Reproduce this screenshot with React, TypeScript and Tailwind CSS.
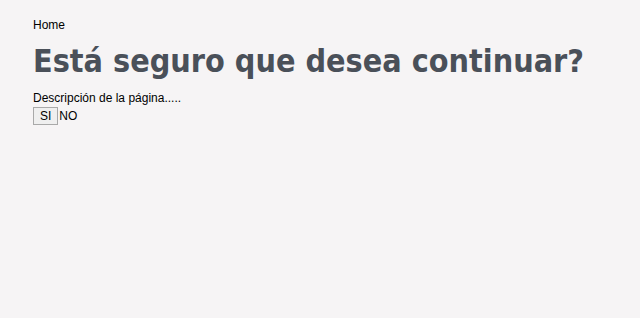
export default function App() {
  return (
    <div className="min-h-screen bg-[#f6f4f5] px-[33px] pt-[18px] font-['Liberation_Sans',Arial,sans-serif] text-[12px] text-black">
      <div className="leading-[15px]">Home</div>
      <h1 className="mt-[4px] whitespace-nowrap font-['DejaVu_Sans',sans-serif] font-stretch-condensed text-[32px] font-bold leading-[48px] text-[#4a5059]">
        Está seguro que desea continuar?
      </h1>
      <p className="mt-[6px] leading-[15px]">Descripción de la página.....</p>
      <div className="mt-[1px] flex items-center">
        <button className="h-[18px] border border-[#a9a9a9] bg-[#efefef] px-[6px] text-[12px] leading-[14px]">
          SI
        </button>
        <span className="ml-[1px] leading-[15px]">NO</span>
      </div>
    </div>
  );
}
